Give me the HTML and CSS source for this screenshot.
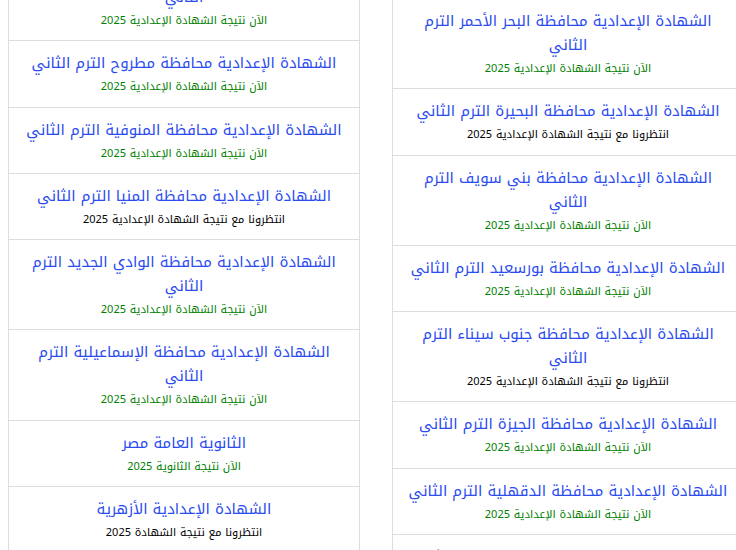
FILE: index.html
```html
<!DOCTYPE html>
<html lang="ar">
<head>
  <meta charset="UTF-8" />
  <meta name="viewport" content="width=device-width, initial-scale=1" />
  <title>نتيجة الشهادة الإعدادية 2025</title>
  <link rel="stylesheet" href="styles.css">
</head>
<body>
  <div class="results">
    <!-- left column -->
    <ul class="result-list shifted">
      <li class="result-item">
        <a class="result-title" href="#">الشهادة الإعدادية محافظة الإسكندرية الترم الثاني</a>
        <span class="result-note ready">الآن نتيجة الشهادة الإعدادية 2025</span>
      </li>
      <li class="result-item">
        <a class="result-title" href="#">الشهادة الإعدادية محافظة مطروح الترم الثاني</a>
        <span class="result-note ready">الآن نتيجة الشهادة الإعدادية 2025</span>
      </li>
      <li class="result-item">
        <a class="result-title" href="#">الشهادة الإعدادية محافظة المنوفية الترم الثاني</a>
        <span class="result-note ready">الآن نتيجة الشهادة الإعدادية 2025</span>
      </li>
      <li class="result-item">
        <a class="result-title" href="#">الشهادة الإعدادية محافظة المنيا الترم الثاني</a>
        <span class="result-note">انتظرونا مع نتيجة الشهادة الإعدادية 2025</span>
      </li>
      <li class="result-item">
        <a class="result-title" href="#">الشهادة الإعدادية محافظة الوادي الجديد الترم الثاني</a>
        <span class="result-note ready">الآن نتيجة الشهادة الإعدادية 2025</span>
      </li>
      <li class="result-item">
        <a class="result-title" href="#">الشهادة الإعدادية محافظة الإسماعيلية الترم الثاني</a>
        <span class="result-note ready">الآن نتيجة الشهادة الإعدادية 2025</span>
      </li>
      <li class="result-item">
        <a class="result-title" href="#">الثانوية العامة مصر</a>
        <span class="result-note ready">الآن نتيجة الثانوية 2025</span>
      </li>
      <li class="result-item">
        <a class="result-title" href="#">الشهادة الإعدادية الأزهرية</a>
        <span class="result-note">انتظرونا مع نتيجة الشهادة 2025</span>
      </li>
    </ul>

    <!-- right column -->
    <ul class="result-list">
      <li class="result-item">
        <a class="result-title" href="#">الشهادة الإعدادية محافظة البحر الأحمر الترم الثاني</a>
        <span class="result-note ready">الآن نتيجة الشهادة الإعدادية 2025</span>
      </li>
      <li class="result-item">
        <a class="result-title" href="#">الشهادة الإعدادية محافظة البحيرة الترم الثاني</a>
        <span class="result-note">انتظرونا مع نتيجة الشهادة الإعدادية 2025</span>
      </li>
      <li class="result-item">
        <a class="result-title" href="#">الشهادة الإعدادية محافظة بني سويف الترم الثاني</a>
        <span class="result-note ready">الآن نتيجة الشهادة الإعدادية 2025</span>
      </li>
      <li class="result-item">
        <a class="result-title" href="#">الشهادة الإعدادية محافظة بورسعيد الترم الثاني</a>
        <span class="result-note ready">الآن نتيجة الشهادة الإعدادية 2025</span>
      </li>
      <li class="result-item">
        <a class="result-title" href="#">الشهادة الإعدادية محافظة جنوب سيناء الترم الثاني</a>
        <span class="result-note">انتظرونا مع نتيجة الشهادة الإعدادية 2025</span>
      </li>
      <li class="result-item">
        <a class="result-title" href="#">الشهادة الإعدادية محافظة الجيزة الترم الثاني</a>
        <span class="result-note ready">الآن نتيجة الشهادة الإعدادية 2025</span>
      </li>
      <li class="result-item">
        <a class="result-title" href="#">الشهادة الإعدادية محافظة الدقهلية الترم الثاني</a>
        <span class="result-note ready">الآن نتيجة الشهادة الإعدادية 2025</span>
      </li>
      <li class="result-item">
        <a class="result-title" href="#">الشهادة الإعدادية محافظة الشرقية الترم الثاني</a>
        <span class="result-note ready">الآن نتيجة الشهادة الإعدادية 2025</span>
      </li>
    </ul>
  </div>
</body>
</html>
```

FILE: styles.css
```css
body {
  font-family: "Noto Kufi Arabic", "Droid Arabic Kufi", "Noto Sans", sans-serif;
  margin: 0;
  padding: 0 8px;
  height: 550px;
  overflow: hidden;
  background: #fff;
}

.results {
  display: grid;
  grid-template-columns: 352px 352px;
  column-gap: 32px;
  align-items: start;
}

.result-list {
  list-style: none;
  margin: -1px 0 0;
  padding: 0;
  border-left: 1px solid #ddd;
  border-right: 1px solid #ddd;
}
.result-list.shifted {
  margin-top: -49px;
}

.result-item {
  direction: rtl;
  text-align: center;
  padding: 10px 15px 10.3px;
  border-bottom: 1px solid #ddd;
}

.result-title {
  display: block;
  font-size: 15px;
  line-height: 24px;
  color: #2a4cf0;
  text-decoration: none;
}

.result-note {
  display: block;
  margin-top: 3px;
  font-size: 11px;
  line-height: 18px;
  color: #000;
}
.result-note.ready {
  color: #008000;
}
```
